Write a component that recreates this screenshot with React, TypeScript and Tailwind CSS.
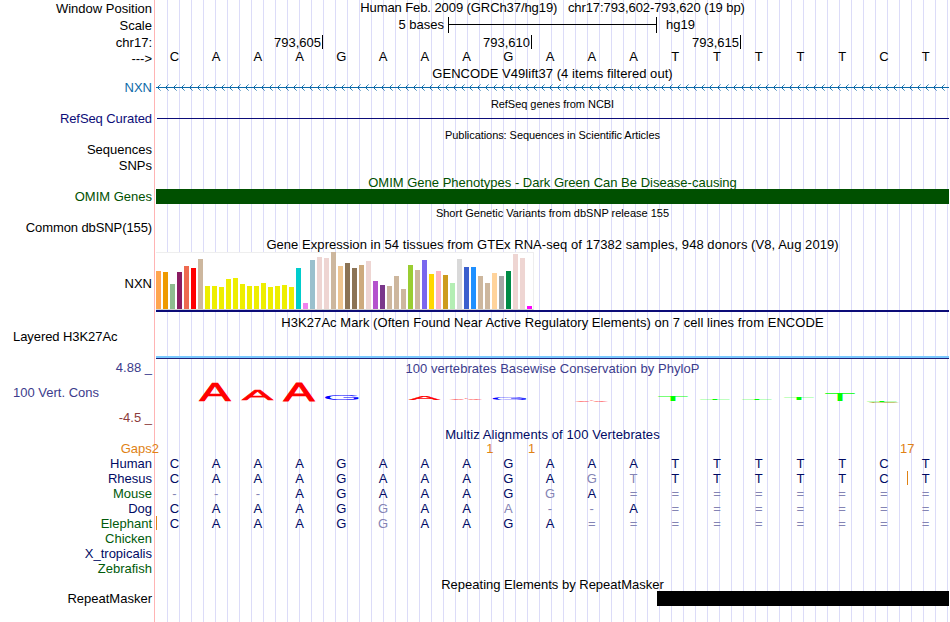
import React from 'react';
import clsx from 'clsx';

interface TrackProps {
    height: string;
    label?: React.ReactNode;
    labelClass?: string;
    children?: React.ReactNode;
}

interface LogoLetter {
    char: string;
    x: number;
    width: number;
    top: number;
    bottom: number;
    color: string;
}

const YELLOW = '#eeee00';

// [height, color] for each tissue
const tissues: [number, string][] = [
    [38, '#ffa54f'], [37, '#ee9a00'], [25, '#8fbc8f'], [37, '#8b1c62'], [43, '#ee6a50'], [41, '#ff0000'], [50, '#cdb79e'],
    [23, YELLOW], [23, YELLOW], [22, YELLOW], [30, YELLOW], [31, YELLOW], [25, YELLOW], [23, YELLOW],
    [23, YELLOW], [26, YELLOW], [22, YELLOW], [23, YELLOW], [24, YELLOW], [22, YELLOW],
    [41, '#00cdcd'], [6, '#ee82ee'], [49, '#9ac0cd'], [52, '#eed5d2'], [51, '#eed5d2'], [57, '#cdb79e'], [43, '#eec591'],
    [46, '#8b7355'], [41, '#8b7355'], [44, '#cdaa7d'], [48, '#eed5d2'], [28, '#b452cd'], [24, '#7a378b'], [23, '#cdb79e'],
    [33, '#cdb79e'], [20, '#cdb79e'], [44, '#9acd32'], [39, '#cdb79e'], [49, '#7a67ee'], [35, '#ffd700'], [38, '#ffb6c1'],
    [34, '#cd9b1d'], [26, '#b4eeb4'], [50, '#d9d9d9'], [42, '#3a5fcd'], [42, '#1e90ff'], [33, '#cdb79e'], [26, '#cdb79e'],
    [36, '#ffd39b'], [33, '#a6a6a6'], [38, '#008b45'], [55, '#eed5d2'], [51, '#eed5d2'], [3, '#ff00ff'],
];

const logoLetters: LogoLetter[] = [
    { char: 'A', x: 43.5, width: 31, top: 23, bottom: 40.5, color: '#ff0000' },
    { char: 'A', x: 86, width: 31, top: 29.5, bottom: 39.8, color: '#ff0000' },
    { char: 'A', x: 127.5, width: 31, top: 22.5, bottom: 40.5, color: '#ff0000' },
    { char: 'G', x: 169, width: 35, top: 35, bottom: 40, color: '#0000ff' },
    { char: 'A', x: 253, width: 31, top: 36, bottom: 40, color: '#ff0000' },
    { char: 'A', x: 294, width: 32, top: 39, bottom: 40, color: '#ff0000' },
    { char: 'G', x: 336.5, width: 35, top: 37, bottom: 40, color: '#0000ff' },
    { char: 'A', x: 419.5, width: 32, top: 41, bottom: 42, color: '#ff0000' },
    { char: 'T', x: 502, width: 30, top: 36, bottom: 41, color: '#00ff00' },
    { char: 'T', x: 544, width: 30, top: 39, bottom: 40, color: '#00ff00' },
    { char: 'T', x: 586, width: 30, top: 39, bottom: 40, color: '#00ff00' },
    { char: 'T', x: 628, width: 30, top: 38, bottom: 40, color: '#00ff00' },
    { char: 'T', x: 669, width: 30, top: 33, bottom: 41, color: '#00ff00' },
    { char: 'T', x: 711, width: 30, top: 41, bottom: 42, color: '#00ff00' },
    { char: 'C', x: 713, width: 31, top: 42, bottom: 43, color: '#999900' },
];

// Lower case marks a base that differs from the human one
const species = [
    { name: 'Human', green: false, bases: 'CAAAGAAAGAAATTTTTCT' },
    { name: 'Rhesus', green: false, bases: 'CAAAGAAAGAgtTTTTTCT', insert: 18 },
    { name: 'Mouse', green: true, bases: '---AGAAAGgA========' },
    { name: 'Dog', green: false, bases: 'CAAAGgAAa--A=======' },
    { name: 'Elephant', green: true, bases: 'CAAAGgAAGA=========', insert: 0 },
    { name: 'Chicken', green: true, bases: '' },
    { name: 'X_tropicalis', green: false, bases: '' },
    { name: 'Zebrafish', green: true, bases: '' },
];

const gaps: Record<number, string> = { 8: '1', 9: '1', 18: '17' };

const Track = ({ height, label, labelClass, children }: TrackProps) => (
    <div className={clsx('flex shrink-0 gap-1', height)}>
        <div className={clsx('w-[152px] shrink-0 text-right', labelClass)}>{label}</div>
        <div className="w-[793px] shrink-0">{children}</div>
    </div>
);

const Title = ({ className, children }: { className?: string; children: React.ReactNode }) => (
    <div className={clsx('text-center whitespace-pre', className)}>{children}</div>
);

const Bases = ({ sequence, insert }: { sequence: string; insert?: number }) => (
    <div className="grid grid-cols-[repeat(19,minmax(0,1fr))] text-center">
        {sequence.split('').map((base, i) => (
            <div key={i} className={clsx('relative pr-[5px]', /[a-z=-]/.test(base) && 'text-[#8484b4]')}>
                {base.toUpperCase()}
                {insert === i && <span className="absolute left-0 top-0 h-3.5 w-px bg-[#e08214]" />}
            </div>
        ))}
    </div>
);

const Ruler = () => (
    <div className="flex h-3.5">
        <div className="h-3.5 w-[167px] border-r border-black pr-px text-right">793,605</div>
        <div className="h-3.5 w-[209px] border-r border-black pr-px text-right">793,610</div>
        <div className="h-3.5 w-[209px] border-r border-black pr-px text-right">793,615</div>
    </div>
);

const GeneArrows = () => (
    <svg className="block" width="793" height="15" shapeRendering="crispEdges">
        <defs>
            <pattern id="strand" x="1" y="0" width="8" height="15" patternUnits="userSpaceOnUse">
                <g fill="#0c6aa8">
                    <rect x="0" y="7" width="1" height="1" />
                    <rect x="1" y="6" width="1" height="1" />
                    <rect x="1" y="8" width="1" height="1" />
                    <rect x="2" y="5" width="1" height="1" opacity=".8" />
                    <rect x="2" y="9" width="1" height="1" opacity=".8" />
                    <rect x="3" y="4" width="1" height="1" opacity=".5" />
                    <rect x="3" y="10" width="1" height="1" opacity=".5" />
                </g>
            </pattern>
        </defs>
        <rect x="1" width="788" height="15" fill="url(#strand)" />
        <rect y="7" width="793" height="1" fill="#0c6aa8" />
    </svg>
);

const Expression = () => (
    <div>
        <div className="flex h-[58px] w-[378px] items-end gap-0.5 border-t border-r border-b border-[#eeeeee] border-b-[#d0d0d0] bg-white">
            {tissues.map(([value, color], i) => (
                <div key={i} className="w-[5px] shrink-0" style={{ height: value, backgroundColor: color }} />
            ))}
        </div>
        <div className="h-0.5 bg-[#0c0c78]" />
    </div>
);

// Cap height of the font at 48px is 33px
const glyphWidth: Record<string, number> = { A: 32, G: 33, T: 27.5, C: 31 };
const glyphOffset: Record<string, number> = { A: 0, G: 2.4, T: 1, C: 2.4 };

const ConservationLogo = () => (
    <svg className="block" width="793" height="51" viewBox="0 16 793 51">
        {logoLetters.map(({ char, x, width, top, bottom, color }, i) => {
            const sx = width / glyphWidth[char];
            const sy = (bottom - top) / 33;
            return (
                <text
                    key={i}
                    fontSize="48"
                    fill={color}
                    stroke={color}
                    strokeWidth={char === 'A' ? 1.4 : 0}
                    transform={`translate(${x - glyphOffset[char] * sx} ${bottom}) scale(${sx} ${sy})`}
                >
                    {char}
                </text>
            );
        })}
    </svg>
);

const App: React.FC = () => {
    return (
        <div className="h-[622px] w-[950px] overflow-hidden bg-white font-['Liberation_Sans',Arial,sans-serif] text-[13px] leading-[15px] text-black">
            <div className="flex h-full w-[949px] flex-col bg-[linear-gradient(#ffb4b4,#ffb4b4),repeating-linear-gradient(90deg,transparent_0px,transparent_11px,#dcdcf8_11px,#dcdcf8_12px)] bg-[size:1px_100%,793px_100%] bg-[position:154px_0,156px_0] bg-no-repeat">
                <Track height="h-[17px]" label="Window Position" labelClass="pt-px">
                    <Title className="tracking-[-0.08px]">Human Feb. 2009 (GRCh37/hg19)   chr17:793,602-793,620 (19 bp)</Title>
                </Track>
                <Track height="h-[18px]" label="Scale" labelClass="pt-px">
                    <div className="flex">
                        <span className="w-[292px] pr-1 text-right">5 bases</span>
                        <span className="flex h-4 w-[209px] items-center border-x border-black">
                            <span className="mb-px h-px w-full bg-black" />
                        </span>
                        <span className="pl-[9px]">hg19</span>
                    </div>
                </Track>
                <Track height="h-[14px]" label="chr17:">
                    <Ruler />
                </Track>
                <Track height="h-[17px]" label="--->" labelClass="pt-0.5">
                    <Bases sequence="CAAAGAAAGAAATTTTTCT" />
                </Track>

                <Track height="h-[14px]">
                    <Title className="tracking-[0.05px]">GENCODE V49lift37 (4 items filtered out)</Title>
                </Track>
                <Track height="h-[17px]" label="NXN" labelClass="text-[#0c6aa8]">
                    <GeneArrows />
                </Track>

                <Track height="h-[14px]">
                    <Title className="text-[11px] tracking-[-0.04px]">RefSeq genes from NCBI</Title>
                </Track>
                <Track height="h-[17px]" label="RefSeq Curated" labelClass="tracking-[-0.08px] text-[#0c0c78]">
                    <div className="ml-px mt-[7px] h-px bg-[#0c0c78]" />
                </Track>

                <Track height="h-[14px]">
                    <Title className="text-[11px] tracking-[-0.06px]">Publications: Sequences in Scientific Articles</Title>
                </Track>
                <Track height="h-[16px]" label="Sequences" />
                <Track height="h-[17px]" label="SNPs" />

                <Track height="h-[14px]">
                    <Title className="text-[#005000]">OMIM Gene Phenotypes - Dark Green Can Be Disease-causing</Title>
                </Track>
                <Track height="h-[17px]" label="OMIM Genes" labelClass="text-[#005000]">
                    <div className="h-[15px] bg-[#005000]" />
                </Track>

                <Track height="h-[14px]">
                    <Title className="text-[11px]">Short Genetic Variants from dbSNP release 155</Title>
                </Track>
                <Track height="h-[17px]" label="Common dbSNP(155)" labelClass="tracking-[-0.1px]" />

                <Track height="h-[15px]">
                    <Title className="tracking-[0.055px]">Gene Expression in 54 tissues from GTEx RNA-seq of 17382 samples, 948 donors (V8, Aug 2019)</Title>
                </Track>
                <Track height="h-[63px]" label="NXN" labelClass="pt-6">
                    <Expression />
                </Track>

                <Track height="h-[14px]">
                    <Title className="tracking-[0.055px]">H3K27Ac Mark (Often Found Near Active Regulatory Elements) on 7 cell lines from ENCODE</Title>
                </Track>
                <Track height="h-[31px]" label="Layered H3K27Ac" labelClass="pl-[13px] !text-left tracking-[-0.07px]">
                    <div className="mt-[27px] h-[3px] border-b border-[#202078] bg-[#78c8ff]" />
                </Track>

                <Track
                    height="h-[67px]"
                    labelClass="flex flex-col gap-2.5 text-[#3c3c8c]"
                    label={
                        <>
                            <div>4.88 _</div>
                            <div className="pl-[13px] text-left">100 Vert. Cons</div>
                            <div className="text-[#8c3c3c]">-4.5 _</div>
                        </>
                    }
                >
                    <Title className="pt-px tracking-[0.04px] text-[#3c3c8c]">100 vertebrates Basewise Conservation by PhyloP</Title>
                    <ConservationLogo />
                </Track>

                <div className="text-[#000a64]">
                    <Track height="h-[14px]">
                        <Title className="tracking-[0.1px]">Multiz Alignments of 100 Vertebrates</Title>
                    </Track>
                    <div className="flex h-[15px] text-[#e08214]">
                        <div className="-mr-[3px] w-[159px] shrink-0 text-right">Gaps2</div>
                        <div className="grid w-[793px] shrink-0 grid-cols-[repeat(19,minmax(0,1fr))]">
                            {species[0].bases.split('').map((_, i) => (
                                <div key={i} className="flex w-0 justify-center">{gaps[i]}</div>
                            ))}
                        </div>
                    </div>
                    {species.map(({ name, green, bases, insert }) => (
                        <Track key={name} height="h-[15px]" label={name} labelClass={green ? 'text-[#005a0a]' : ''}>
                            <Bases sequence={bases} insert={insert} />
                        </Track>
                    ))}
                </div>

                <Track height="h-[15px]">
                    <Title className="pt-px">Repeating Elements by RepeatMasker</Title>
                </Track>
                <Track height="h-[31px]" label="RepeatMasker">
                    <div className="ml-[501px] h-[15px] bg-black" />
                </Track>
            </div>
        </div>
    );
};

export default App;
